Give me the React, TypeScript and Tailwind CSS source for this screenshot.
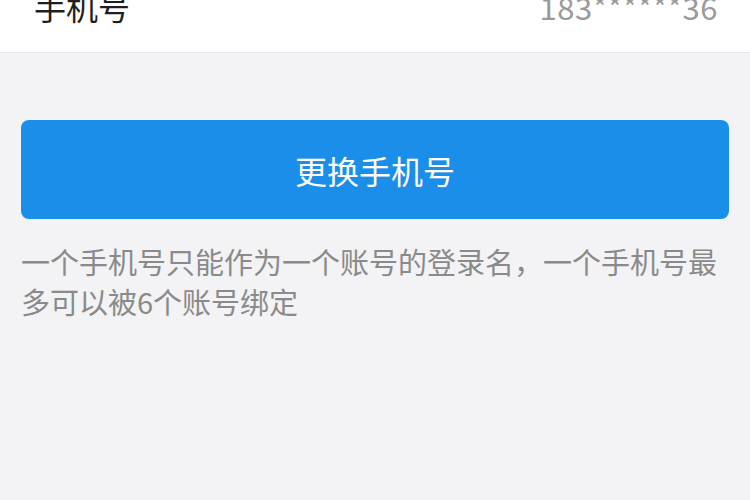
import React from 'react';

const font = { fontFamily: '"Noto Sans CJK SC", Roboto, "Noto Sans", sans-serif' };

const App: React.FC = () => {
    return (
        <div className="w-[750px] h-[500px] bg-[#f3f3f6] overflow-hidden" style={font}>
            <div className="h-[53px] bg-white border-b border-[#e6e6ea] overflow-hidden">
                <div className="-mt-[18px] h-[48px] flex items-center justify-between pl-[34px] pr-[32px]">
                    <span className="text-[32px] leading-none text-[#1f1f1f]">手机号</span>
                    <span className="text-[31px] leading-none text-[#9a9a9a] tracking-[0.5px]">183******36</span>
                </div>
            </div>

            <div className="px-[21px] pt-[67px]">
                <button className="w-full h-[99px] rounded-[8px] bg-[#1b8ee9] text-white text-[32px] flex items-center justify-center">
                    更换手机号
                </button>
                <p className="mt-[22px] text-[29px] leading-[40px] text-[#8a8a8a]">
                    一个手机号只能作为一个账号的登录名，一个手机号最多可以被6个账号绑定
                </p>
            </div>
        </div>
    );
};

export default App;
